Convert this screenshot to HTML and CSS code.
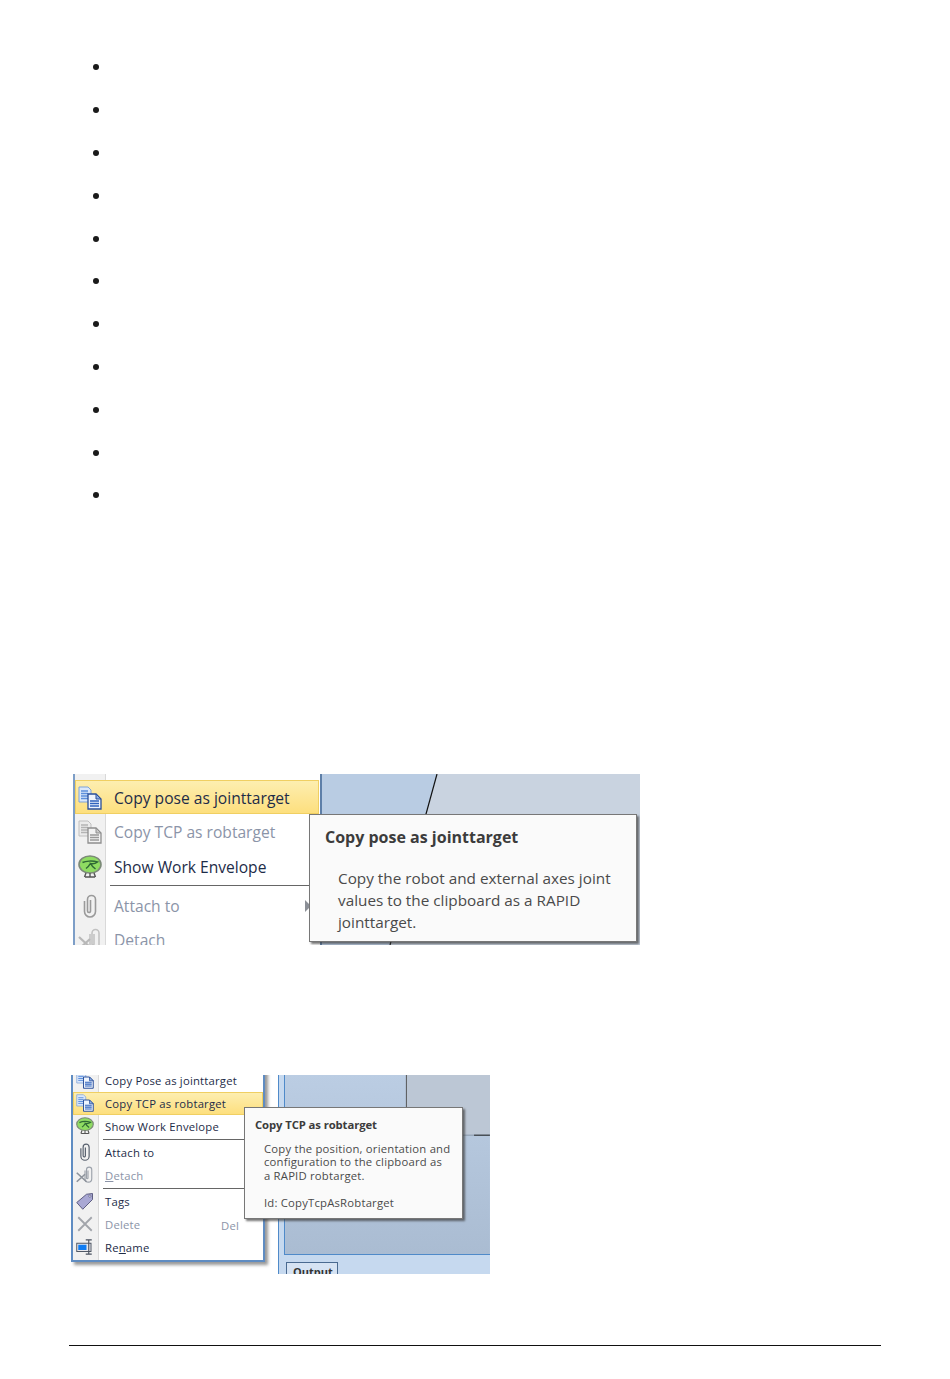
FILE: index.html
```html
<!DOCTYPE html>
<html lang="en">
<head>
  <meta charset="UTF-8">
  <title>Copy pose as jointtarget</title>
  <link rel="stylesheet" href="styles.css">
</head>
<body>
  <svg class="defs" width="0" height="0">
    <symbol id="i-copy" viewBox="0 0 24 24">
      <path d="M1 1h9l3 3v12H1z" fill="#dbe8fa" stroke="#7fa3d8"/>
      <path d="M3 5h7M3 7.500h7M3 10h7M3 12.500h7" stroke="#5d8fdc" stroke-width="1.300"/>
      <path d="M10 8h8l5 5v10H10z" fill="#eef4fd" stroke="#2a4f9a" stroke-width="1.300"/>
      <path d="M18 8v5h5z" fill="#8fb0e6" stroke="#2a4f9a"/>
      <path d="M12 15h9M12 17.500h9M12 20h9" stroke="#2f62bd" stroke-width="1.400"/>
    </symbol>
    <symbol id="i-envelope" viewBox="0 0 24 24">
      <ellipse cx="12" cy="9.500" rx="11" ry="8.500" fill="#8fdc62" stroke="#7c8a78" stroke-width="1.600"/>
      <path d="M4.500 7.500c3-1.500 10-2 15-.5-2 1.500-5 2-7 1.500 1 2 3 4 5 5.500M12 9c-1 2-2.500 3.500-4 4.500" fill="none" stroke="#2f6a35" stroke-width="1.500"/>
      <path d="M8 18l-1.500 4M12 18v4M16 18l1.500 4M7 22h10" stroke="#555" stroke-width="1.400"/>
    </symbol>
    <symbol id="i-clip" viewBox="0 0 24 24">
      <path d="M6.500 7v10.500a5.500 5.500 0 0 0 11 0V5.500a4 4 0 0 0-8 0V17a1.500 1.500 0 0 0 3 0V6" fill="none" stroke="#59616e" stroke-width="1.600"/>
    </symbol>
    <symbol id="i-detach" viewBox="0 0 24 24">
      <path d="M12 6v11a4.500 4.500 0 0 0 9 0V5a3.500 3.500 0 0 0-7 0v11a1 1 0 0 0 2 0V6" fill="none" stroke="#9ba1aa" stroke-width="1.500"/>
      <path d="M1 9l13 12M1 21l11-10" stroke="#8d939c" stroke-width="2.200"/>
    </symbol>
    <symbol id="i-tag" viewBox="0 0 24 24">
      <path d="M1 14L14 3l8-1v8L9 23z" fill="#a9a8d4" stroke="#5b5b80" stroke-width="1.300"/>
      <circle cx="18.500" cy="5.500" r="1.500" fill="#fff" stroke="#5b5b80"/>
    </symbol>
    <symbol id="i-x" viewBox="0 0 24 24">
      <path d="M3 3l18 18M21 3L3 21" stroke="#a2a5ab" stroke-width="2.400"/>
    </symbol>
    <symbol id="i-rename" viewBox="0 0 24 24">
      <rect x="1" y="7" width="19" height="11" fill="#e8e8ec" stroke="#4d5563" stroke-width="1.300"/>
      <rect x="3" y="9" width="11" height="7" fill="#0f7cf2"/>
      <path d="M13 2.500h8M13 21.500h8M17 2.500v19" fill="none" stroke="#4a5260" stroke-width="1.500"/>
    </symbol>
  </svg>

  <div class="page">
    <ul class="blank-list">
      <li></li><li></li><li></li><li></li><li></li><li></li>
      <li></li><li></li><li></li><li></li><li></li>
    </ul>

    <!-- first capture -->
    <div class="shot shot-pose">
      <div class="menu">
        <div class="row active"><svg class="ico"><use href="#i-copy"/></svg><span>Copy pose as jointtarget</span></div>
        <div class="row off"><svg class="ico gray"><use href="#i-copy"/></svg><span>Copy TCP as robtarget</span></div>
        <div class="row row-last"><svg class="ico"><use href="#i-envelope"/></svg><span>Show Work Envelope</span></div>
        <div class="sep"></div>
        <div class="row off"><svg class="ico gray"><use href="#i-clip"/></svg><span>Attach to</span><i class="arrow"></i></div>
        <div class="row off"><svg class="ico gray"><use href="#i-detach"/></svg><span>Detach</span></div>
      </div>
      <svg class="scene" viewBox="0 0 318 171" width="318" height="171">
        <rect width="318" height="171" fill="#b9cce3"/>
        <path d="M115 0H318V171H68z" fill="#c9d3e0"/>
        <path d="M115 0L68 171" stroke="#111" stroke-width="1.200"/>
      </svg>
      <div class="tip">
        <h4>Copy pose as jointtarget</h4>
        <p>Copy the robot and external axes joint<br>values to the clipboard as a RAPID<br>jointtarget.</p>
      </div>
    </div>

    <!-- second capture -->
    <div class="shot shot-tcp">
      <div class="menu">
        <div class="row"><svg class="ico"><use href="#i-copy"/></svg><span>Copy Pose as jointtarget</span></div>
        <div class="row active"><svg class="ico"><use href="#i-copy"/></svg><span>Copy TCP as robtarget</span></div>
        <div class="row"><svg class="ico"><use href="#i-envelope"/></svg><span>Show Work Envelope</span></div>
        <div class="sep"></div>
        <div class="row"><svg class="ico"><use href="#i-clip"/></svg><span>Attach to</span></div>
        <div class="row off"><svg class="ico"><use href="#i-detach"/></svg><span><u>D</u>etach</span></div>
        <div class="sep"></div>
        <div class="row"><svg class="ico"><use href="#i-tag"/></svg><span>Tags</span></div>
        <div class="row off"><svg class="ico"><use href="#i-x"/></svg><span>Delete</span><span class="key">Del</span></div>
        <div class="row"><svg class="ico"><use href="#i-rename"/></svg><span>Re<u>n</u>ame</span></div>
      </div>
      <div class="app">
        <svg class="scene" viewBox="0 0 206 180" width="206" height="180">
          <defs>
            <linearGradient id="floor" x1="0" y1="0" x2="0" y2="1">
              <stop offset="0" stop-color="#bbcde3"/>
              <stop offset="1" stop-color="#aabcd2"/>
            </linearGradient>
          </defs>
          <rect width="206" height="180" fill="url(#floor)"/>
          <rect x="122" width="84" height="60" fill="#bcc7d5"/>
          <path d="M122 0V60" stroke="#555"/>
          <path d="M122 60.500H190" stroke="#8a97a8"/>
          <path d="M190 60.500H206" stroke="#111"/>
        </svg>
        <div class="tab">Output</div>
      </div>
      <div class="tip">
        <h4>Copy TCP as robtarget</h4>
        <p>Copy the position, orientation and<br>configuration to the clipboard as<br>a RAPID robtarget.</p>
        <p class="tip-id">Id: CopyTcpAsRobtarget</p>
      </div>
    </div>

    <div class="foot"></div>
  </div>
</body>
</html>
```

FILE: styles.css
```css
* { box-sizing: border-box; }
body {
  margin: 0;
  background: #fff;
  font-family: "Open Sans", sans-serif;
  color: #1d2c48;
}
.defs { position: absolute; }
.page {
  padding: 0 69px;
}

/* empty bullets */
.blank-list {
  list-style: none;
  margin: 0;
  padding: 46px 0 0 24px;
}
.blank-list li {
  height: 42.8px;
  display: flex;
  align-items: center;
}
.blank-list li::before {
  content: "";
  width: 6px;
  height: 6px;
  border-radius: 50%;
  background: #1a1a1a;
}

/* captures */
.shot {
  position: relative;
  display: flex;
  overflow: hidden;
  background: #fff;
}
.shot-pose {
  width: 567px;
  height: 171px;
  margin: 257.2px 0 0 4px;
}
.shot-tcp {
  width: 419px;
  height: 199px;
  margin: 130px 0 0 2px;
}
.scene { display: block; flex: none; }

.menu { flex: none; }
.row {
  display: flex;
  align-items: center;
  border: 1px solid transparent;
}
.row.active {
  background: linear-gradient(#fdeeb0, #fddf7e);
  border-color: #f0cf62;
}
.row.off { color: #8b94a8; }
.ico { flex: none; }
.ico.gray { filter: grayscale(1) opacity(0.6); }
.sep { height: 1px; background: #666; }
.arrow {
  margin-left: auto;
  border-left: 6px solid #8b8f96;
  border-top: 6px solid transparent;
  border-bottom: 6px solid transparent;
}
.key { margin-left: auto; padding: 3px 23px 0 0; }

/* first capture */
.shot-pose .menu {
  width: 249px;
  height: 171px;
  padding-top: 6px;
  border-left: 2px solid #7d9ec7;
  border-right: 2px solid #5e7fa8;
  background: linear-gradient(90deg, #f1f1f1 30px, #d9d9d9 30px, #d9d9d9 31px, #fff 31px);
  font-size: 15.600px;
}
.shot-pose .row { height: 34.500px; padding: 1px 0 0 2px; }
.shot-pose .row.active { height: 34px; padding-top: 2px; margin-right: 1px; }
.shot-pose .row.row-last { height: 35.500px; padding-top: 2px; }
.shot-pose .ico { width: 24px; height: 24px; margin-right: 12px; }
.shot-pose .sep { margin: 1px 0 2px 35px; }
.shot-pose .arrow { margin-right: 8px; }

/* second capture */
.shot-tcp .menu {
  width: 194px;
  height: 193px;
  margin-top: -6px;
  border: 2px solid #5f8cc2;
  border-top: 0;
  background: linear-gradient(90deg, #f1f1f1 25px, #d9d9d9 25px, #d9d9d9 26px, #fff 26px);
  box-shadow: 3px 3px 3px rgba(70, 70, 70, 0.55);
  font-size: 11.300px;
  letter-spacing: 0.2px;
}
.shot-tcp .row { height: 23px; padding-left: 2px; }
.shot-tcp .ico { width: 18px; height: 18px; margin-right: 11px; }
.shot-tcp .sep { margin: 1px 0 1px 30px; }

.app {
  flex: 1;
  margin-left: 13px;
  padding-left: 5px;
  border-left: 1px solid #4f8ac9;
  background: #c6d9ef;
}
.app .scene { border-left: 1px solid #4f8ac9; border-bottom: 1px solid #4f8ac9; }
.tab {
  width: 52px;
  height: 20px;
  margin: 7px 0 0 2px;
  padding: 1px 0 0 6px;
  border: 1px solid #4a6a90;
  background: #d6e3f3;
  font-size: 11px;
  font-weight: 700;
  color: #333;
}

/* tooltips */
.tip {
  position: absolute;
  background: #fafafa;
  border: 1px solid #777;
  box-shadow: 2px 2px 2px rgba(60, 60, 60, 0.7);
  color: #4a4a4a;
}
.tip h4 { margin: 0; font-weight: 700; color: #3c3c3c; }
.tip p { margin: 0; }
.shot-pose .tip {
  left: 236px;
  top: 40px;
  width: 328px;
  height: 128px;
  padding: 10px 0 0 15px;
  font-size: 15.300px;
}
.shot-pose .tip h4 { font-size: 16px; line-height: 24px; }
.shot-pose .tip p { margin: 18px 0 0 13px; line-height: 22px; }
.shot-tcp .tip {
  left: 173px;
  top: 32px;
  width: 219px;
  height: 112px;
  padding: 9px 0 0 10px;
  font-size: 11.300px;
  letter-spacing: 0.2px;
}
.shot-tcp .tip h4 { font-size: 11.300px; line-height: 15px; letter-spacing: -0.1px; }
.shot-tcp .tip p { margin: 10px 0 0 9px; line-height: 13.500px; }
.shot-tcp .tip .tip-id { margin-top: 14px; }

.foot {
  margin-top: 71px;
  border-top: 1px solid #111;
}
```
